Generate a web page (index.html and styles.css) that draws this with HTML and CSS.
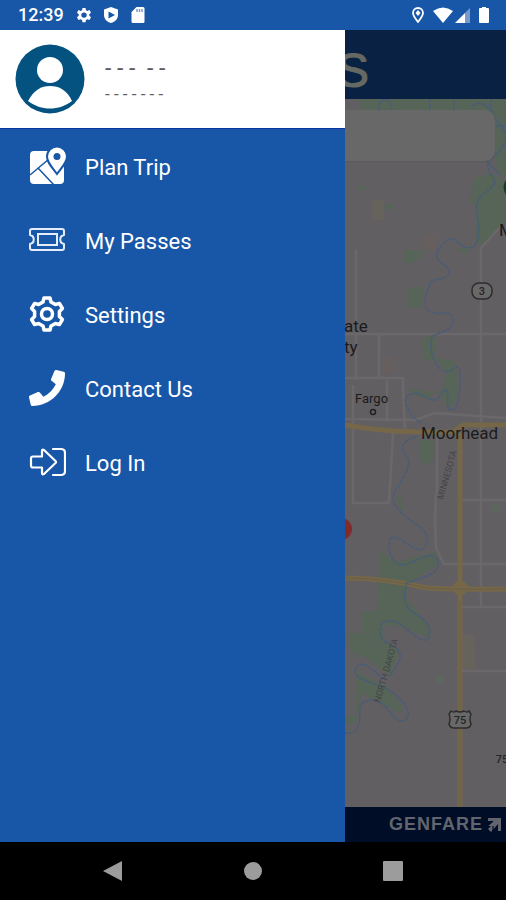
FILE: index.html
```html
<!DOCTYPE html>
<html lang="en">
<head>
<meta charset="utf-8">
<meta name="viewport" content="width=device-width, initial-scale=1">
<title>Menu</title>
<link rel="stylesheet" href="styles.css">
</head>
<body>
<header class="status">
  <span class="clock">12:39</span>
  <svg class="status-icon" viewBox="0 0 16 16"><path fill="#fff" fill-rule="evenodd" d="M6.500 0h3l.5 2.200 1.300.7 2.200-.8 1.500 2.600-1.700 1.500v1.600l1.700 1.500-1.500 2.700-2.200-.8-1.300.8-.5 2.200h-3L6 12l-1.300-.8-2.200.8L1 9.300l1.700-1.500V6.200L1 4.700l1.500-2.600 2.200.8L6 2.200zM8 4.400a2.700 2.700 0 1 0 0 5.400 2.700 2.700 0 0 0 0-5.400z" transform="translate(0 1)"/></svg>
  <svg class="status-icon shield" viewBox="0 0 16 16"><path fill="#fff" fill-rule="evenodd" d="M8 0l7 2.500V8c0 4-3 7-7 8-4-1-7-4-7-8V2.500zM5.500 4.500v7L12 8z"/></svg>
  <svg class="status-icon card" viewBox="0 0 16 16"><path fill="#fff" d="M6.500 0H13q1.500 0 1.500 1.500v13q0 1.500-1.500 1.500H3q-1.500 0-1.500-1.500V5z"/><path stroke="#7c9acb" stroke-width="1.500" d="M7 2v3M9.500 2v3M12 2v3"/></svg>
  <span class="status-gap"></span>
  <svg class="status-icon" viewBox="0 0 16 16"><path fill="none" stroke="#fff" stroke-width="1.800" d="M8 15C5 11 3 8.600 3 6a5 5 0 0 1 10 0c0 2.600-2 5-5 9z"/><path fill="#fff" d="M8 3l2.500 3L8 9 5.500 6z"/></svg>
  <svg class="wifi" viewBox="0 0 20 16"><path fill="#fff" d="M0 4Q10-3 20 4L10 16z"/></svg>
  <svg class="status-icon signal" viewBox="0 0 16 16"><path fill="#fff" d="M0 16L10 6v10z"/><path fill="#7799cf" d="M10 6l5-5v15h-5z"/></svg>
  <svg class="status-icon battery" viewBox="0 0 16 16"><path fill="#fff" d="M6 0h4v1h2q1 0 1 1v13q0 1-1 1H4q-1 0-1-1V2q0-1 1-1h2z"/></svg>
</header>

<main class="screen">
  <aside class="drawer">
    <div class="profile">
      <svg class="avatar" viewBox="0 0 70 70"><circle cx="35" cy="35" r="34.500" fill="#03527f"/><circle cx="35" cy="26" r="13" fill="#fff"/><path fill="#fff" d="M13 57C19 46 26 42 35 42s17 4 22 15C44 67 26 67 13 57z"/></svg>
      <div class="profile-text">
        <p class="profile-name">- - -&nbsp; - -</p>
        <p class="profile-mail">- - - - - - -</p>
      </div>
    </div>
    <nav class="menu">
      <a class="item" href="#plan">
        <svg class="item-icon" viewBox="0 0 38 38"><rect x="2" y="4" width="34" height="33" rx="4" fill="#fff"/><path fill="none" stroke="#1856a7" stroke-width="1.500" d="M2 28L21 12M10 21l16 17"/><path fill="#fff" stroke="#1856a7" stroke-width="2" d="M29 27C23 19 19 15 19 9.500a10 10 0 0 1 20 0C39 15 35 19 29 27z"/><circle cx="29" cy="9.500" r="3.500" fill="#1856a7"/></svg>
        <span class="label">Plan Trip</span></a>
      <a class="item" href="#passes">
        <svg class="item-icon" viewBox="0 0 38 38"><path fill="none" stroke="#e4ecfa" stroke-width="2" stroke-linejoin="round" d="M4 8h30q2 0 2 2v4c-5 1-5 8 0 9v4q0 2-2 2H4q-2 0-2-2v-4c5-1 5-8 0-9v-4q0-2 2-2z"/><rect x="10" y="13" width="19" height="11" fill="none" stroke="#e4ecfa" stroke-width="2"/></svg>
        <span class="label">My Passes</span></a>
      <a class="item" href="#settings">
        <svg class="item-icon" viewBox="-19 -19 38 38"><path fill="none" stroke="#fff" stroke-width="3.500" stroke-linejoin="round" d="M-4-12L-3-16H3L4-12 8.400-9.500 12.400-10.600 15.400-5.500 12.400-2.500V2.500L15.400 5.500 12.400 10.600 8.400 9.500 4 12 3 16H-3L-4 12-8.400 9.500-12.400 10.600-15.400 5.500-12.400 2.500V-2.500L-15.400-5.500-12.400-10.600-8.400-9.500z"/><circle r="5.500" fill="none" stroke="#fff" stroke-width="3.500"/></svg>
        <span class="label">Settings</span></a>
      <a class="item" href="#contact">
        <svg class="item-icon" viewBox="-14 -14 540 540"><path fill="#fff" d="M493.400 24.600l-104-24c-11.300-2.600-22.900 3.300-27.500 13.900l-48 112c-4.200 9.800-1.400 21.300 6.900 28l60.600 49.600c-36 76.700-98.900 140.500-177.200 177.200l-49.600-60.600c-6.800-8.300-18.200-11.100-28-6.900l-112 48C3.900 366.500-2 378.100.6 389.400l24 104C27.100 504.200 36.700 512 48 512c256.100 0 464-207.500 464-464 0-11.200-7.700-20.900-18.600-23.400z"/></svg>
        <span class="label">Contact Us</span></a>
      <a class="item" href="#login">
        <svg class="item-icon" viewBox="0 0 38 38"><path fill="none" stroke="#fff" stroke-width="2.200" stroke-linejoin="round" stroke-linecap="round" d="M5 13.500h9V8q0-2 2-1l11.500 11q1 1 0 2L16 31q-2 1-2-1v-5.500H5q-2 0-2-2v-7q0-2 2-2zM25 6h8q4 0 4 4v18q0 4-4 4h-8"/></svg>
        <span class="label">Log In</span></a>
    </nav>
  </aside>

  <section class="page">
    <div class="brand">S</div>
    <div class="map">
      <svg class="map-art" viewBox="345 99 161 708" preserveAspectRatio="xMinYMin slice">
        <g fill="#566558">
          <path d="M345 99h161v80l-8-6-5-25V125l-15-15H362l-4-11zM474 178l18-5 14 10v40l-22 22-9-2 2-35-7-8zM405 250h18l-2 7-10 6-8-1zM407 288l16-2-1 22-15-1zM422 338l13-3v25l-12-1zM436 358l20 3 2 36-9 13-12-20-9 9-16-5-2-5 30 4 7-20zM420 440h14v20l-7 5-7-5zM400 490l4 25-8-15zM380 550l15 12 42-10 2 12-31 19-2 14 24 30-2 11-25-11-20-2 2 15 14 9-8 28-30-23-6 6 2 12 30 15 16 20-3 6-38-20-6 30h-12v-5l12-2V653l-7-2v-18h13v-22h15z"/>
          <path d="M358 186h10l-8 8zM386 204h8l-2 6h-6zM457 248h12l-4 7z"/>
          <path fill="#5c655e" d="M436 675h8v8h-8zM492 504h8v8h-8z"/>
        </g>
        <path fill="#66635c" d="M371 200h13v20h-11zM463 635h11l2 34h-13z"/><path fill="#675f5d" d="M424 233l14 5-2 12-12-2zM383 358h10v16h-10z"/>
        <g fill="none" stroke="#6b686c" stroke-width="2.500">
          <path d="M356 250v130M345 334h161M379 334v45M345 378h58v10M403 388l2 45M353 385v118h36l4-70M345 419l70 1 20-7 71 5M481 418V248l20-22M481 418v189M458 500h48M437 433v55q-3 20-1 60l8 16h62M461 607h45M461 671h45M387 380v42"/>
        </g>
        <g fill="none" stroke="#756748" stroke-width="5">
          <path d="M345 425q40 7 76 7h32l10-7h43M460 433v374M345 578q40 0 82 10 36 2 79 1"/>
        </g>
        <path fill="#756748" d="M450 588l7-7h6l8 7-8 7h-6z"/>
        <path fill="none" stroke="#6a6048" d="M345 578q40 0 82 10 36 2 79 1M460 600v207"/>
        <path class="river" d="M492 99C484 120 515 128 504 145S482 160 491 174 490 184 491 188C485 195 473 196 477 215S478 248 469 248 455 235 448 240 436 250 437 257 453 267 449 274 433 277 430 284 420 308 431 312 452 309 453 319 444 331 435 335 433 367 443 371 459 358 460 374 458 411 451 410 451 388 445 390 440 404 430 399 418 392 411 394 404 404 408 409 412 418 422 423M417 436C398 443 401 450 407 457S402 480 396 490 394 506 404 515 430 530 427 542 417 550 406 543 390 535 389 543 393 569 407 564 435 550 438 561 430 575 407 583C401 600 406 609 417 615S432 629 429 637 414 636 404 627 379 618 380 632 392 640 398 650 396 665 390 676M383 679C373 670 362 658 356 668S370 682 383 687 411 709 408 716 398 724 389 711 365 698 361 705 366 735 345 733"/>
        <path class="river" d="M454 110v-11M430 99v11M379 110c-1-13 11-15 13 0M472 106c8-6 15-2 22 10M496 126h10M487 161l13 14"/>
        <g class="place">
          <text x="344" y="332" font-size="17">ate</text>
          <text x="344" y="353" font-size="17">ty</text>
          <text x="355" y="403" font-size="13">Fargo</text>
          <text x="421" y="439" font-size="17">Moorhead</text>
          <text x="499" y="236" font-size="17">M</text>
        </g>
        <circle cx="373" cy="412" r="2.500" fill="none" stroke="#222" stroke-width="1.500"/>
        <g class="state">
          <text transform="translate(443 500) rotate(-74)">MINNESOTA</text>
          <text transform="translate(380 703) rotate(-74)">NORTH DAKOTA</text>
        </g>
        <g class="route">
          <rect x="472" y="283" width="20" height="16" rx="7"/><text x="482" y="295">3</text>
          <path d="M451 711q3 2 5 0 4 2 8 0 3 2 5 0l2 3q-2 5 0 10-1 4-5 4h-12q-4 0-5-4 2-5 0-10z"/><text x="460" y="724">75</text>
          <text x="502" y="763">75</text>
        </g>
        <path fill="#183f25" d="M506 180q-5 6 0 15z"/>
        <circle cx="341" cy="529" r="11" fill="#832a2a"/>
      </svg>
      <div class="search"></div>
    </div>
    <footer class="credit"><span>GENFARE</span>
      <svg class="credit-icon" viewBox="0 0 14 14"><path fill="#62656e" d="M1 0h13v13h-3V6l-7 8-3-3 3-3H1l5-5H1z"/><path stroke="#000d27" stroke-width="1.200" d="M0 8l6-5M6 14V8"/></svg>
    </footer>
  </section>
</main>

<footer class="keys">
  <button class="key" aria-label="Back"><svg viewBox="0 0 20 20"><path fill="#9c9c9c" d="M0 10L19 0v20z"/></svg></button>
  <button class="key" aria-label="Home"><svg viewBox="0 0 20 20"><circle cx="10" cy="10" r="9" fill="#9c9c9c"/></svg></button>
  <button class="key" aria-label="Recent apps"><svg viewBox="0 0 20 20"><rect width="20" height="20" rx="1" fill="#9c9c9c"/></svg></button>
</footer>
</body>
</html>
```
FILE: styles.css
```css
* { box-sizing: border-box; }

body {
  margin: 0;
  min-height: 100vh;
  display: flex;
  flex-direction: column;
  background: #000;
  font-family: Roboto, "Liberation Sans", sans-serif;
}

p { margin: 0; }
svg { display: block; }

.status {
  display: flex;
  align-items: center;
  height: 30px;
  padding: 0 14px 0 18px;
  background: #1856a7;
  color: #fff;
}
.clock {
  margin-right: 12px;
  font-size: 18px;
  font-weight: 500;
  line-height: 32px;
}
.status-icon { width: 16px; height: 16px; }
.shield { margin-left: 11px; }
.card { margin-left: 11px; }
.status-gap { flex: 1; }
.wifi { width: 20px; height: 16px; margin-left: 7px; }
.signal { margin-left: 2px; }
.battery { margin-left: 5px; }

.screen {
  flex: 1;
  display: flex;
}

.drawer {
  flex: 0 0 345px;
  background: #1856a7;
}
.profile {
  display: flex;
  align-items: center;
  gap: 20px;
  height: 99px;
  padding: 0 15px;
  background: #fff;
  border-bottom: 1px solid #0a35a0;
}
.avatar { width: 70px; height: 70px; }
.profile-text {
  padding-top: 4px;
  color: #5c5c5c;
}
.profile-name {
  font-size: 23px;
  line-height: 26px;
}
.profile-mail {
  font-size: 17px;
  line-height: 24px;
}
.item {
  display: flex;
  align-items: center;
  gap: 19px;
  height: 74px;
  padding-left: 28px;
  color: #fff;
  text-decoration: none;
}
.item-icon { width: 38px; height: 38px; }
.label {
  padding-top: 4px;
  font-size: 22px;
  line-height: 30px;
}

.page {
  flex: 1;
  min-width: 0;
  display: flex;
  flex-direction: column;
  overflow: hidden;
}
.brand {
  height: 69px;
  margin-left: -8px;
  padding-top: 14px;
  background: #092244;
  color: #656961;
  font-family: "Liberation Sans", Arial, sans-serif;
  font-size: 48px;
  line-height: 54px;
  -webkit-text-stroke: 1px #656961;
}
.map {
  position: relative;
  flex: 1;
  background: #625f63;
}
.map-art {
  position: absolute;
  inset: 0;
  width: 100%;
  height: 100%;
}
.search {
  position: relative;
  height: 51px;
  margin: 11px 11px 0 0;
  border-radius: 0 10px 10px 0;
  background: #686868;
  box-shadow: 0 1px 1px #5a5a5a;
}
.river {
  fill: none;
  stroke: #485c78;
  stroke-width: 1.5;
  stroke-dasharray: 4 1;
}
.place { fill: #1b1b1b; }
.state {
  fill: #454347;
  font-size: 9px;
}
.route {
  fill: #686868;
  stroke: #2d2d2d;
  stroke-width: 1.5;
}
.route text {
  fill: #262626;
  stroke: none;
  font-size: 11px;
  font-weight: 500;
  text-anchor: middle;
}
.credit {
  display: flex;
  align-items: center;
  justify-content: flex-end;
  gap: 4px;
  height: 35px;
  padding-right: 5px;
  background: #000d27;
  color: #62656e;
  font-family: "Liberation Sans", Arial, sans-serif;
  font-size: 18px;
  font-weight: 700;
  letter-spacing: 1px;
}
.credit-icon { width: 14px; height: 14px; }

.keys {
  display: flex;
  justify-content: center;
  gap: 120px;
  height: 58px;
}
.key {
  width: 20px;
  padding: 0;
  border: 0;
  background: none;
}
.key svg { width: 20px; height: 20px; }
```
